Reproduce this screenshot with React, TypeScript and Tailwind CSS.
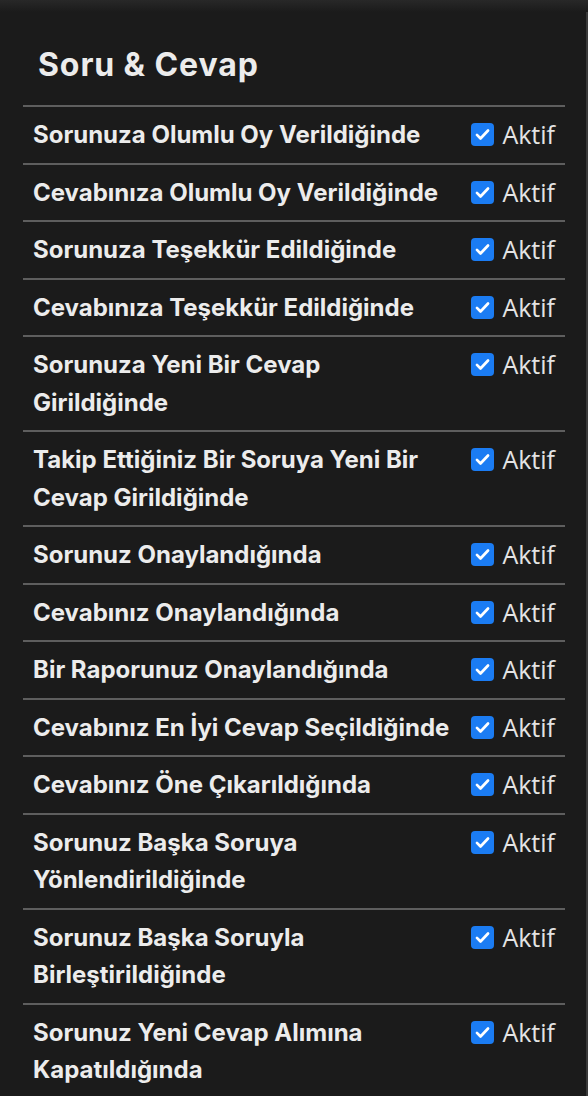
import React from "react";

const items: string[] = [
  "Sorunuza Olumlu Oy Verildiğinde",
  "Cevabınıza Olumlu Oy Verildiğinde",
  "Sorunuza Teşekkür Edildiğinde",
  "Cevabınıza Teşekkür Edildiğinde",
  "Sorunuza Yeni Bir Cevap Girildiğinde",
  "Takip Ettiğiniz Bir Soruya Yeni Bir Cevap Girildiğinde",
  "Sorunuz Onaylandığında",
  "Cevabınız Onaylandığında",
  "Bir Raporunuz Onaylandığında",
  "Cevabınız En İyi Cevap Seçildiğinde",
  "Cevabınız Öne Çıkarıldığında",
  "Sorunuz Başka Soruya Yönlendirildiğinde",
  "Sorunuz Başka Soruyla Birleştirildiğinde",
  "Sorunuz Yeni Cevap Alımına Kapatıldığında",
];

function CheckBox() {
  return (
    <span className="flex h-[23px] w-[23px] shrink-0 items-center justify-center rounded-[4px] bg-[#1b7cf3]">
      <svg viewBox="0 0 24 24" className="h-[19px] w-[19px]" fill="none">
        <path d="M5 12.5l4.5 4.5L19 7" stroke="white" strokeWidth="3.4" strokeLinecap="round" strokeLinejoin="round" />
      </svg>
    </span>
  );
}

function Row({ label }: { label: string }) {
  return (
    <li className="flex items-start justify-between gap-4 border-b-2 border-[#5e5e5e] py-[9px] pl-[10px] pr-[10px]">
      <span className="text-[24px] font-bold leading-[37.5px] text-[#ececec] [font-family:Inter,'Noto_Sans',sans-serif]">
        {label}
      </span>
      <label className="flex h-[37.5px] shrink-0 items-center gap-[8px]">
        <CheckBox />
        <span className="text-[25px] leading-[37.5px] text-[#e4e4e4] [font-family:'Open_Sans',sans-serif]">Aktif</span>
      </label>
    </li>
  );
}

export default function App() {
  return (
    <div className="min-h-screen w-full overflow-hidden bg-[#1b1b1b] shadow-[inset_-2px_0_0_#3a3a3a]">
      <div className="h-[12px] bg-gradient-to-b from-[#282828] to-[#1b1b1b]" />
      <h2 className="pl-[38px] pt-[34px] pb-[21px] text-[32px] font-bold leading-[38px] tracking-[0.9px] text-[#ececec] [font-family:Inter,'Noto_Sans',sans-serif]">
        Soru &amp; Cevap
      </h2>
      <ul className="mx-[23px] border-t-2 border-[#5e5e5e]">
        {items.map((t) => (
          <Row key={t} label={t} />
        ))}
      </ul>
    </div>
  );
}
